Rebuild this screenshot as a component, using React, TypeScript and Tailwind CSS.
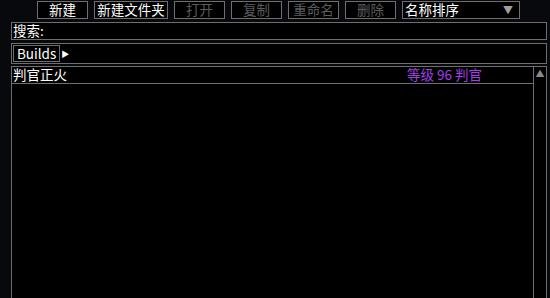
const buttons = [
  { label: "新建", width: "w-[51px]", enabled: true },
  { label: "新建文件夹", width: "w-[74px]", enabled: true },
  { label: "打开", width: "w-[51px]", enabled: false },
  { label: "复制", width: "w-[51px]", enabled: false },
  { label: "重命名", width: "w-[51px]", enabled: false },
  { label: "删除", width: "w-[51px]", enabled: false },
];

const builds = [{ name: "判官正火", info: "等级 96 判官" }];

export default function App() {
  return (
    <div
      className="w-[550px] h-[298px] overflow-hidden bg-[#08090c] text-[13.5px] leading-none text-white"
      style={{ fontFamily: '"Noto Sans CJK SC", "Noto Sans", sans-serif' }}
    >
      {/* toolbar */}
      <div className="flex gap-[6px] pl-[37px] pt-[1px]">
        {buttons.map((b) => (
          <div
            key={b.label}
            className={`${b.width} h-[18px] flex items-center justify-center border border-[#6e6e6e] bg-black ${
              b.enabled ? "text-white" : "text-[#5c5c5c]"
            }`}
          >
            {b.label}
          </div>
        ))}
        <div className="w-[118px] h-[18px] flex items-center justify-between border border-[#6e6e6e] bg-black pl-[2px] pr-[6px]">
          <span>名称排序</span>
          <span className="text-[10px] text-[#a0a0a0]">▼</span>
        </div>
      </div>

      {/* search */}
      <div className="ml-[11px] mt-[3px] w-[536px] h-[18px] flex items-center border border-[#6e6e6e] bg-black pl-[1px]">
        搜索:
      </div>

      {/* path */}
      <div className="ml-[11px] mt-[3px] w-[536px] h-[21px] flex items-center border border-[#6e6e6e] bg-black pl-[1px]">
        <div className="h-[17px] px-[3px] flex items-center border border-[#6e6e6e]">Builds</div>
        <span className="ml-[1px] text-[8px] text-white">▶</span>
      </div>

      {/* list */}
      <div className="ml-[11px] mt-[2px] w-[536px] h-[240px] flex border-l border-t border-[#6e6e6e] bg-black">
        <div className="flex-1">
          {builds.map((b) => (
            <div
              key={b.name}
              className="h-[17px] flex items-center justify-between border-b border-[#6e6e6e] pl-[1px] pr-[51px]"
            >
              <span>{b.name}</span>
              <span className="text-[#a23ee6]">{b.info}</span>
            </div>
          ))}
        </div>
        <div className="w-[14px] border-l border-r border-[#6e6e6e] flex justify-center pt-[2px]">
          <span className="text-[9px] text-[#8a8a8a]">▲</span>
        </div>
      </div>
    </div>
  );
}
